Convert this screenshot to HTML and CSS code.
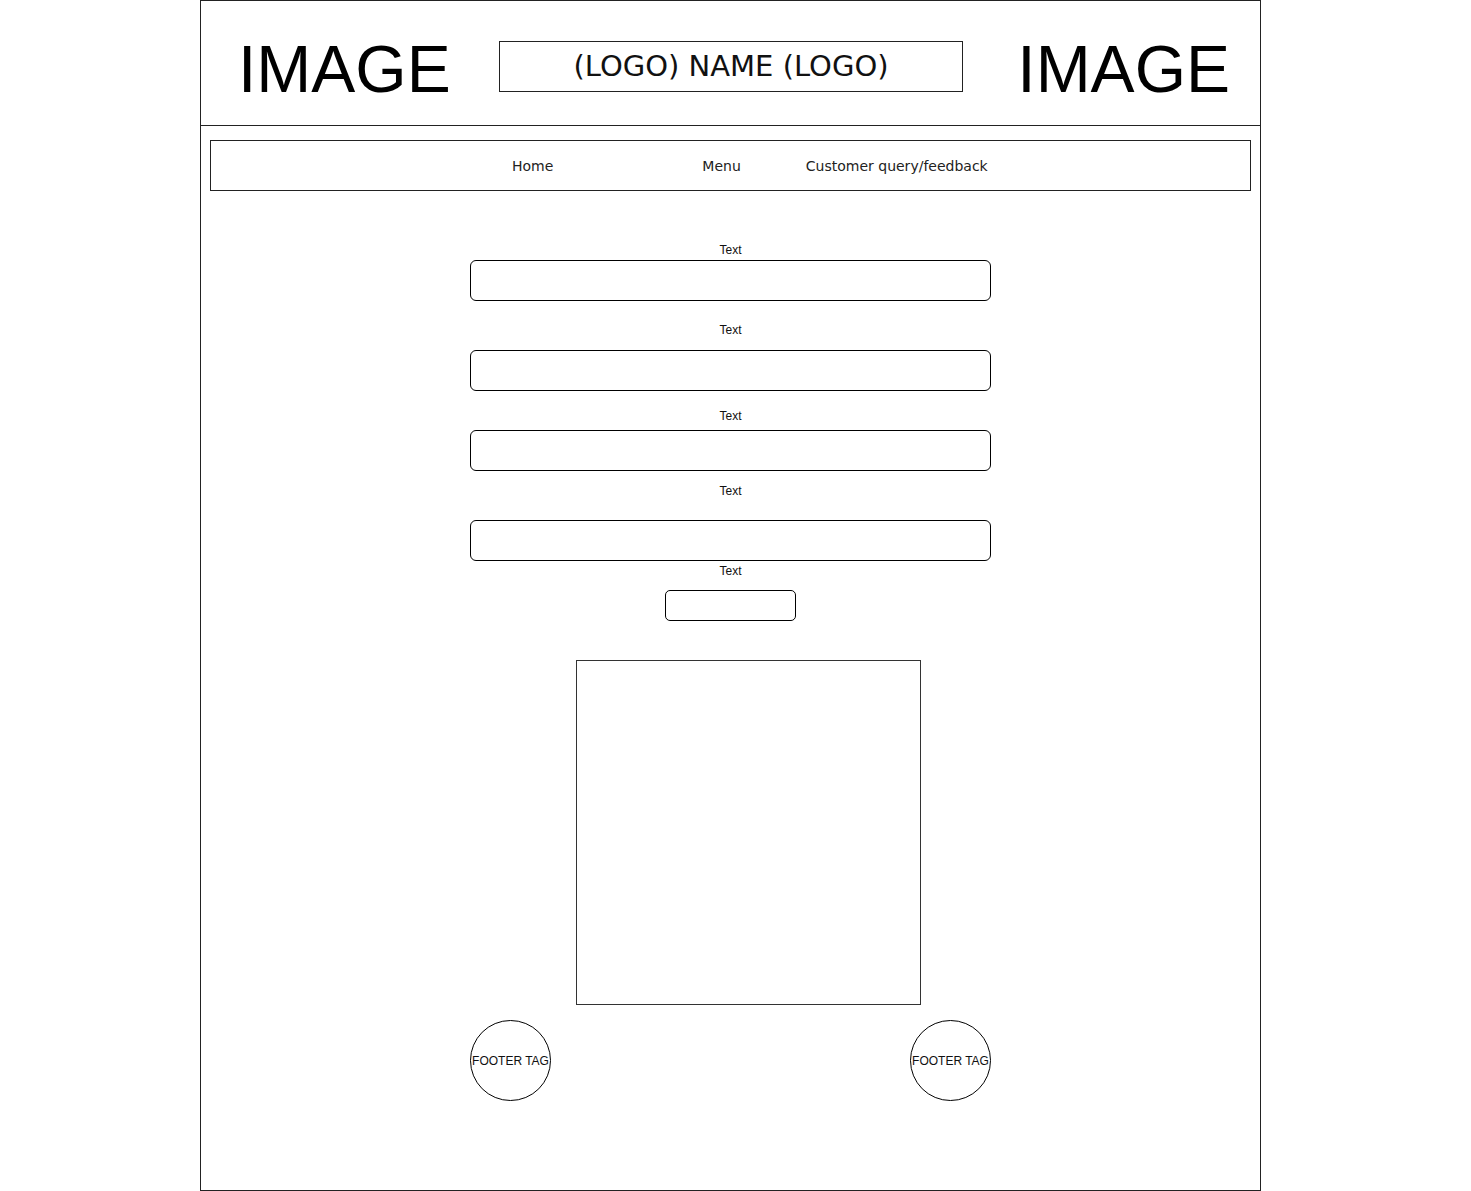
FILE: index.html
```html
<!DOCTYPE html>
<html lang="en">
<head>
  <meta charset="UTF-8">
  <title>Restaurant wireframe</title>
  <link rel="stylesheet" href="styles.css">
</head>
<body>
  <div class="page">
    <header class="top">
      <div class="top-image">IMAGE</div>
      <div class="logo-box">(LOGO) NAME (LOGO)</div>
      <div class="top-image">IMAGE</div>
    </header>

    <nav class="nav">
      <a href="#" class="nav-home">Home</a>
      <a href="#" class="nav-menu">Menu</a>
      <a href="#" class="nav-query">Customer query/feedback</a>
    </nav>

    <main class="content">
      <form class="form">
        <label class="field-label gap-3">Text</label>
        <input type="text" class="field-input after-22">

        <label class="field-label gap-13">Text</label>
        <input type="text" class="field-input after-18">

        <label class="field-label gap-7">Text</label>
        <input type="text" class="field-input after-13">

        <label class="field-label gap-22">Text</label>
        <input type="text" class="field-input after-3">

        <label class="field-label gap-12">Text</label>
        <button type="button" class="submit-box"></button>
      </form>

      <div class="image-box"></div>

      <footer class="footer">
        <div class="footer-tag">FOOTER TAG</div>
        <div class="footer-tag">FOOTER TAG</div>
      </footer>
    </main>
  </div>
</body>
</html>
```

FILE: styles.css
```css
* {
  margin: 0;
  padding: 0;
  box-sizing: border-box;
}

body {
  background: #fff;
  font-family: 'Liberation Sans', Arial, sans-serif;
  color: #000;
}

.page {
  margin-left: 200px;
  width: 1061px;
  height: 1191px;
  border: 1px solid #222;
}

.top {
  display: flex;
  align-items: center;
  justify-content: space-between;
  height: 125px;
  padding: 0 30px 0 37px;
  border-bottom: 1px solid #222;
}

.top-image {
  font-size: 66px;
  line-height: 1;
  margin-top: 12px;
}

.logo-box {
  width: 464px;
  height: 51px;
  margin-top: 7px;
  margin-right: 6px;
  border: 1px solid #222;
  text-align: center;
  font-family: 'DejaVu Sans', Verdana, sans-serif;
  font-size: 29px;
  line-height: 49px;
  color: #111;
}

.nav {
  display: flex;
  align-items: center;
  height: 51px;
  margin: 14px 9px 0;
  border: 1px solid #222;
  font-family: 'DejaVu Sans', Verdana, sans-serif;
  font-size: 14px;
}

.nav a {
  color: #222;
  text-decoration: none;
}

.nav-home {
  margin-left: 301px;
}

.nav-menu {
  margin-left: 149px;
}

.nav-query {
  margin-left: 65px;
}

.content {
  display: flex;
  flex-direction: column;
  align-items: center;
  padding-top: 52px;
}

.form {
  display: flex;
  flex-direction: column;
  align-items: center;
}

.field-label {
  font-size: 12px;
  line-height: 14px;
  color: #111;
}

.field-input {
  width: 521px;
  height: 41px;
  border: 1px solid #000;
  border-radius: 6px;
  background: #fff;
}

.submit-box {
  width: 131px;
  height: 31px;
  border: 1px solid #000;
  border-radius: 5px;
  background: #fff;
}

.gap-3 { margin-bottom: 3px; }
.gap-7 { margin-bottom: 7px; }
.gap-12 { margin-bottom: 12px; }
.gap-13 { margin-bottom: 13px; }
.gap-22 { margin-bottom: 22px; }

.after-3 { margin-bottom: 3px; }
.after-13 { margin-bottom: 13px; }
.after-18 { margin-bottom: 18px; }
.after-22 { margin-bottom: 22px; }

.image-box {
  width: 345px;
  height: 345px;
  margin-top: 39px;
  margin-left: 36px;
  border: 1px solid #333;
}

.footer {
  display: flex;
  justify-content: space-between;
  width: 521px;
  margin-top: 15px;
}

.footer-tag {
  display: flex;
  align-items: center;
  justify-content: center;
  width: 81px;
  height: 81px;
  border: 1px solid #000;
  border-radius: 50%;
  font-size: 12px;
  white-space: nowrap;
  color: #111;
}
```
